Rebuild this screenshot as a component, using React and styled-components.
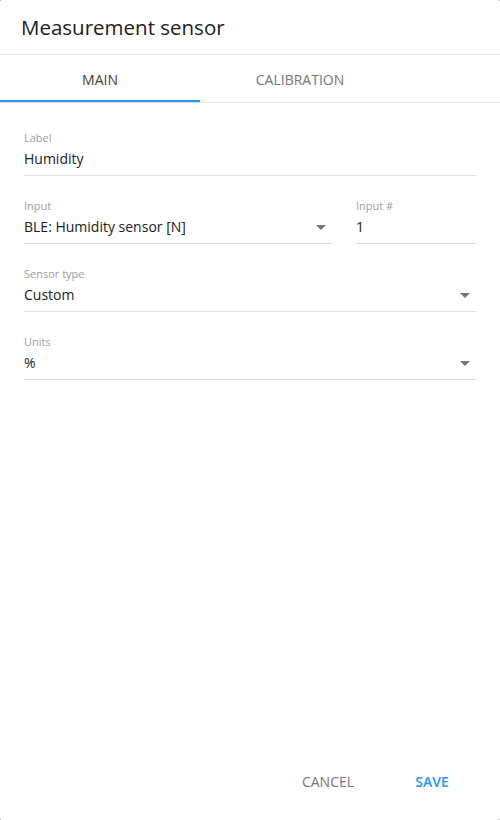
import React from "react";
import styled, { createGlobalStyle } from "styled-components";

const Global = createGlobalStyle`
  html, body { margin: 0; padding: 0; background: #9e9e9e; }
  body { font-family: "Open Sans", "Noto Sans", sans-serif; }
  * { box-sizing: border-box; }
`;

const Dialog = styled.div`
  width: 500px;
  height: 820px;
  background: #fff;
  border-radius: 2px;
  display: flex;
  flex-direction: column;
  overflow: hidden;
`;

const Header = styled.div`
  height: 55px;
  flex: none;
  padding: 0 21px;
  display: flex;
  align-items: center;
  border-bottom: 1px solid #e0e0e0;
`;

const Title = styled.h1`
  margin: 0;
  font-size: 20.5px;
  font-weight: 400;
  color: #212121;
  line-height: 1;
`;

const Tabs = styled.div`
  display: flex;
  flex: none;
  height: 48px;
  border-bottom: 1px solid #e0e0e0;
`;

const Tab = styled.div`
  width: 200px;
  display: flex;
  align-items: center;
  justify-content: center;
  font-size: 14px;
  text-transform: uppercase;
  color: ${(p) => (p.$active ? "#424242" : "#757575")};
  border-bottom: 2px solid ${(p) => (p.$active ? "#2196f3" : "transparent")};
  padding-top: 4px;
`;

const Form = styled.div`
  flex: 1;
  padding: 23px 24px 0;
  display: flex;
  flex-direction: column;
  gap: 18px;
`;

const Row = styled.div`
  display: flex;
  gap: 24px;
`;

const Field = styled.div`
  flex: ${(p) => (p.$width ? `0 0 ${p.$width}px` : "1")};
  display: flex;
  flex-direction: column;
  border-bottom: 1px solid #e0e0e0;
  height: 50px;
  padding-top: 4px;
`;

const FieldLabel = styled.div`
  font-size: 11px;
  line-height: 16px;
  color: #9e9e9e;
`;

const ValueRow = styled.div`
  display: flex;
  align-items: center;
  justify-content: space-between;
  font-size: 14px;
  line-height: 20px;
  color: #212121;
  margin-top: 3px;
`;

const Arrow = styled.span`
  width: 0;
  height: 0;
  border-left: 5px solid transparent;
  border-right: 5px solid transparent;
  border-top: 5px solid #757575;
  margin-right: 6px;
`;

const Actions = styled.div`
  display: flex;
  justify-content: flex-end;
  gap: 16px;
  padding: 0 24px 21px;
`;

const Button = styled.button`
  min-width: 88px;
  height: 36px;
  border: none;
  background: transparent;
  font-family: inherit;
  font-size: 14px;
  text-transform: uppercase;
  font-weight: ${(p) => (p.$primary ? 600 : 400)};
  color: ${(p) => (p.$primary ? "#2196f3" : "#757575")};
  padding: 0 16px;
`;

function TextField({ label, value, select, width }) {
  return (
    <Field $width={width}>
      <FieldLabel>{label}</FieldLabel>
      <ValueRow>
        <span>{value}</span>
        {select && <Arrow />}
      </ValueRow>
    </Field>
  );
}

export default function App() {
  return (
    <>
      <Global />
      <Dialog>
        <Header>
          <Title>Measurement sensor</Title>
        </Header>
        <Tabs>
          <Tab $active>Main</Tab>
          <Tab>Calibration</Tab>
        </Tabs>
        <Form>
          <Row>
            <TextField label="Label" value="Humidity" />
          </Row>
          <Row>
            <TextField label="Input" value="BLE: Humidity sensor [N]" select />
            <TextField label="Input #" value="1" width={120} />
          </Row>
          <Row>
            <TextField label="Sensor type" value="Custom" select />
          </Row>
          <Row>
            <TextField label="Units" value="%" select />
          </Row>
        </Form>
        <Actions>
          <Button>Cancel</Button>
          <Button $primary>Save</Button>
        </Actions>
      </Dialog>
    </>
  );
}
